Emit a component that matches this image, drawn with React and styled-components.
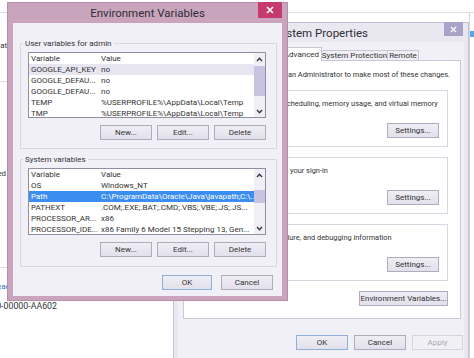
import React from 'react'
import styled, { createGlobalStyle } from 'styled-components'

const GlobalStyle = createGlobalStyle`
  html, body { margin: 0; padding: 0; background: #ffffff; }
  body {
    font-family: Roboto, "Open Sans", sans-serif;
    font-size: 8px;
    color: #333;
  }
  * { box-sizing: border-box; }
`

const Desktop = styled.div`
  position: relative;
  width: 474px;
  height: 358px;
  overflow: hidden;
  background: #fff;
`

/* control panel page behind the two dialogs */
const BackPage = styled.div`
  position: absolute;
  inset: 0;
  display: flex;
  flex-direction: column;
`

const TopRule = styled.div`
  height: 13px;
  flex-shrink: 0;
  border-bottom: 1px solid #dcdce4;
`

const BackBody = styled.div`
  flex: 1;
  display: flex;
`

const LeftStrip = styled.div`
  width: 80px;
  display: flex;
  flex-direction: column;
`

// text that ends at a given x, overflowing off the left of the page
const Fragment = styled.div`
  width: ${p => p.$end}px;
  margin-top: ${p => p.$mt}px;
  height: 11px;
  line-height: 11px;
  display: flex;
  justify-content: flex-end;
  white-space: nowrap;
  font-size: ${p => p.$size || 8}px;
  color: ${p => (p.$link ? '#2f6fd0' : '#333')};
`

const StripRule = styled.div`
  margin-top: ${p => p.$mt}px;
  border-top: 1px solid #dcdce4;
`

const RightEdge = styled.div`
  margin-left: auto;
  width: 5px;
  border-left: 1px solid #d6d5df;
  padding-top: 18px;
`

const BlueMark = styled.div`
  height: 6px;
  background: #5aa7e6;
`

/* dialog chrome */
const Window = styled.div`
  position: absolute;
  z-index: ${p => p.$z};
  left: ${p => p.$x}px;
  top: ${p => p.$y}px;
  width: ${p => p.$w}px;
  height: ${p => p.$h}px;
  display: flex;
  flex-direction: column;
  background: ${p => p.$frame};
  border: 1px solid ${p => p.$edge};
  padding: 0 ${p => p.$pad}px ${p => p.$pad}px;
`

const TitleBar = styled.div`
  position: relative;
  height: ${p => p.$h}px;
  flex-shrink: 0;
  display: flex;
  align-items: center;
  justify-content: center;
  font-size: 11.5px;
  color: #2e2e35;
`

const CloseButton = styled.div`
  position: absolute;
  top: -1px;
  right: ${p => p.$right}px;
  width: ${p => p.$w}px;
  height: ${p => p.$h}px;
  background: ${p => p.$bg};
  display: flex;
  align-items: center;
  justify-content: center;
`

const Client = styled.div`
  flex: 1;
  display: flex;
  flex-direction: column;
  background: #f1f0f6;
  padding: ${p => p.$pad};
`

/* group boxes */
const Group = styled.fieldset`
  margin: ${p => p.$m};
  padding: ${p => p.$pad};
  border: 1px solid #d9d7e3;
  min-width: 0;
`

const Legend = styled.legend`
  margin-left: ${p => p.$ml}px;
  padding: 0 2px;
  height: 11px;
  line-height: 11px;
  color: #333;
`

/* list view */
const ListBox = styled.div`
  display: flex;
  height: ${p => p.$h}px;
  background: #fff;
  border: 1px solid #8f8ea3;
`

const Table = styled.div`
  flex: 1;
  min-width: 0;
  display: flex;
  flex-direction: column;
  overflow: hidden;
`

const Row = styled.div`
  flex-shrink: 0;
  display: grid;
  grid-template-columns: 70px 1fr;
  height: 11px;
  line-height: 11px;
  padding-left: 2px;
  white-space: nowrap;
  overflow: hidden;
  background: ${p => (p.$sel ? '#3b8ef0' : p.$hl ? '#e7e6f0' : 'transparent')};
  color: ${p => (p.$sel ? '#ffffff' : '#333')};
`

const ScrollBar = styled.div`
  width: 11px;
  flex-shrink: 0;
  display: flex;
  flex-direction: column;
  background: #f0eff6;
`

const ArrowBox = styled.div`
  height: 12px;
  flex-shrink: 0;
  display: flex;
  align-items: center;
  justify-content: center;
`

const Track = styled.div`
  flex: 1;
`

const Thumb = styled.div`
  margin-top: ${p => p.$top}px;
  height: ${p => p.$size}px;
  background: #c6c4de;
`

/* buttons */
const ButtonRow = styled.div`
  display: flex;
  justify-content: flex-end;
  gap: ${p => p.$gap}px;
  margin-top: ${p => p.$mt}px;
  padding-right: ${p => p.$pr || 0}px;
`

const Button = styled.div`
  width: ${p => p.$w}px;
  height: 15px;
  display: flex;
  align-items: center;
  justify-content: center;
  white-space: nowrap;
  border: 1px solid ${p => (p.$disabled ? '#d6d5de' : p.$def ? '#8fb1d8' : '#aeadbd')};
  background: ${p => (p.$disabled ? '#f1f0f5' : 'linear-gradient(#efeef5, #e2e0eb)')};
  color: ${p => (p.$disabled ? '#a9a8b3' : '#333')};
`

/* system properties parts */
const TabStrip = styled.div`
  display: flex;
  align-items: flex-end;
  height: 14px;
  padding-left: 2px;
  margin-bottom: -1px;
  position: relative;
  z-index: 1;
`

const Tab = styled.div`
  width: ${p => p.$w}px;
  height: ${p => (p.$active ? 14 : 11)}px;
  display: flex;
  align-items: center;
  justify-content: center;
  white-space: nowrap;
  border: 1px solid #c9c7d6;
  border-bottom-color: ${p => (p.$active ? '#ffffff' : '#c9c7d6')};
  margin-left: -1px;
  background: ${p => (p.$active ? '#ffffff' : '#f0eff5')};
`

const Panel = styled.div`
  display: flex;
  flex-direction: column;
  margin-right: 2px;
  background: #fff;
  border: 1px solid #cbc9d8;
  padding: 9px 12px 12px 7px;
`

const Note = styled.div`
  height: 10px;
  line-height: 10px;
  margin-left: 10px;
  font-size: 7.4px;
  white-space: nowrap;
`

const GroupText = styled.div`
  height: 10px;
  line-height: 10px;
  font-size: 7.4px;
  white-space: nowrap;
`

const Chevron = ({ up }) => (
  <svg width="7" height="5" viewBox="0 0 7 5">
    <polyline
      points={up ? '1,4 3.5,1.3 6,4' : '1,1 3.5,3.7 6,1'}
      fill="none"
      stroke="#34344a"
      strokeWidth="1.4"
    />
  </svg>
)

const CrossIcon = ({ size }) => (
  <svg width={size} height={size} viewBox="0 0 8 8">
    <path d="M1 1 L7 7 M7 1 L1 7" stroke="#fff" strokeWidth="1.6" />
  </svg>
)

const userVars = [
  ['GOOGLE_API_KEY', 'no'],
  ['GOOGLE_DEFAU...', 'no'],
  ['GOOGLE_DEFAU...', 'no'],
  ['TEMP', '%USERPROFILE%\\AppData\\Local\\Temp'],
  ['TMP', '%USERPROFILE%\\AppData\\Local\\Temp'],
]

const sysVars = [
  ['OS', 'Windows_NT'],
  ['Path', 'C:\\ProgramData\\Oracle\\Java\\javapath;C:\\...'],
  ['PATHEXT', '.COM;.EXE;.BAT;.CMD;.VBS;.VBE;.JS;.JS...'],
  ['PROCESSOR_AR...', 'x86'],
  ['PROCESSOR_IDE...', 'x86 Family 6 Model 15 Stepping 13, Gen...'],
]

const VarList = ({ rows, height, thumbTop, thumbSize, selected, hover }) => (
  <ListBox $h={height}>
    <Table>
      <Row>
        <span>Variable</span>
        <span>Value</span>
      </Row>
      {rows.map(([name, value], i) => (
        <Row key={i} $sel={i === selected} $hl={i === hover}>
          <span>{name}</span>
          <span>{value}</span>
        </Row>
      ))}
    </Table>
    <ScrollBar>
      <ArrowBox>
        <Chevron up />
      </ArrowBox>
      <Track>
        <Thumb $top={thumbTop} $size={thumbSize} />
      </Track>
      <ArrowBox>
        <Chevron />
      </ArrowBox>
    </ScrollBar>
  </ListBox>
)

const EditButtons = () => (
  <ButtonRow $gap={5} $mt={7} $pr={0}>
    <Button $w={52}>New...</Button>
    <Button $w={52}>Edit...</Button>
    <Button $w={52}>Delete</Button>
  </ButtonRow>
)

const SettingsGroup = ({ title, text }) => (
  <Group $m="5px 0 0 0" $pad="3px 8px 8px 8px">
    <Legend $ml={-2}>{title}</Legend>
    <GroupText>{text}</GroupText>
    <ButtonRow $gap={0} $mt={14}>
      <Button $w={52}>Settings...</Button>
    </ButtonRow>
  </Group>
)

const App = () => {
  return (
    <>
      <GlobalStyle />
      <Desktop>
        <BackPage>
          <TopRule />
          <BackBody>
            <LeftStrip>
              <Fragment $mt={27} $end={18}>Rating</Fragment>
              <StripRule $mt={30} />
              <Fragment $mt={86} $end={12}>Installed v</Fragment>
              <StripRule $mt={88} />
              <Fragment $mt={13} $end={10} $link>Read</Fragment>
              <Fragment $mt={9} $end={57} $size={8.8}>Product ID: 00000-00000-00000-AA602</Fragment>
            </LeftStrip>
            <RightEdge>
              <BlueMark />
            </RightEdge>
          </BackBody>
        </BackPage>

        <Window $z={1} $x={173} $y={22} $w={296} $h={345} $frame="#e9e8f0" $edge="#c3c1cf" $pad={4}>
          <TitleBar $h={19}>
            System Properties
            <CloseButton $right={1} $w={19} $h={14} $bg="#a9a3c9">
              <CrossIcon size={7} />
            </CloseButton>
          </TitleBar>
          <Client $pad="5px 1px 0 5px">
            <TabStrip>
              <Tab $w={58}>Computer Name</Tab>
              <Tab $w={41}>Hardware</Tab>
              <Tab $w={41} $active>Advanced</Tab>
              <Tab $w={67}>System Protection</Tab>
              <Tab $w={32}>Remote</Tab>
            </TabStrip>
            <Panel>
              <Note>You must be logged on as an Administrator to make most of these changes.</Note>
              <SettingsGroup
                title="Performance"
                text="Visual effects, processor scheduling, memory usage, and virtual memory"
              />
              <SettingsGroup title="User Profiles" text="Desktop settings related to your sign-in" />
              <SettingsGroup
                title="Startup and Recovery"
                text="System startup, system failure, and debugging information"
              />
              <ButtonRow $gap={0} $mt={10}>
                <Button $w={89}>Environment Variables...</Button>
              </ButtonRow>
            </Panel>
            <ButtonRow $gap={6} $mt={16}>
              <Button $w={52} $def>OK</Button>
              <Button $w={52}>Cancel</Button>
              <Button $w={51} $disabled>Apply</Button>
            </ButtonRow>
          </Client>
        </Window>

        <Window $z={2} $x={7} $y={2} $w={281} $h={299} $frame="#c9a4bc" $edge="#b58fa8" $pad={5}>
          <TitleBar $h={20}>
            Environment Variables
            <CloseButton $right={0} $w={24} $h={16} $bg="#c73a6d">
              <CrossIcon size={8} />
            </CloseButton>
          </TitleBar>
          <Client $pad="15px 5px 6px 7px">
            <Group $m="0" $pad="3px 10px 8px 7px">
              <Legend $ml={-5}>User variables for admin</Legend>
              <VarList rows={userVars} height={66} thumbTop={1} thumbSize={30} hover={0} />
              <EditButtons />
            </Group>
            <Group $m="5px 0 0 0" $pad="3px 10px 9px 7px">
              <Legend $ml={-5}>System variables</Legend>
              <VarList rows={sysVars} height={67} thumbTop={9} thumbSize={13} selected={1} />
              <EditButtons />
            </Group>
            <ButtonRow $gap={9} $mt={8} $pr={4}>
              <Button $w={50} $def>OK</Button>
              <Button $w={52}>Cancel</Button>
            </ButtonRow>
          </Client>
        </Window>
      </Desktop>
    </>
  )
}

export default App
